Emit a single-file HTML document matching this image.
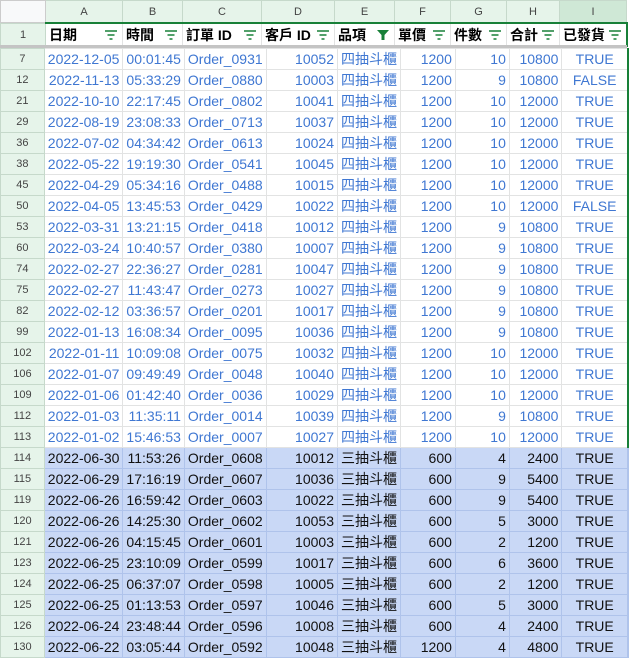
<!DOCTYPE html><html><head><meta charset="utf-8"><style>
body{margin:0;width:629px;height:659px;overflow:hidden;background:#fff;font-family:"Liberation Sans","Noto Sans CJK TC",sans-serif;}
table{border-collapse:collapse;table-layout:fixed;position:absolute;left:0;}
td{border:1px solid #e2e3e3;padding:0 3px;font-size:14px;white-space:nowrap;overflow:hidden;height:20px;line-height:20px;text-align:right;}
#h{top:0}
#h td{background:#e6f4ea;color:#444;font-size:11px;text-align:center;height:21px;border-color:#c6d9cb}
#h td.c{background:#f8f9fa;border-color:#ccc}
#h td.s{background:#cfe8d6}
#r1{top:22px}
#r1 td{height:22px;font-weight:bold;color:#000;text-align:left;position:relative;border-top:2px solid #188038;}
#r1 td.n{background:#e6f4ea;font-weight:normal;font-size:11px;color:#444;text-align:center;border-top:1px solid #c6d9cb}
.f{position:absolute;right:5px;top:6px;width:12px;height:10px}
#b{top:48px}
td.n{background:#e6f4ea;color:#444;font-size:11px;text-align:center;border-color:#c6d9cb}
tr.u td{color:#3f77d2}
tr.u td.n{color:#444}
tr.p td{background:#c9d8f6;color:#111;border-color:#afc3eb}
tr.p td.n{background:#e6f4ea;color:#444;border-color:#c6d9cb}
td.l{text-align:left}td.m{text-align:center}
td.z{border-right:2px solid #188038}
.sep{position:absolute;left:0;top:45px;width:627px;height:3px;background:#c4c4c4}
</style></head><body>
<colgroup></colgroup>
<table id="h"><colgroup><col style="width:45px"><col style="width:77px"><col style="width:60px"><col style="width:79px"><col style="width:73px"><col style="width:60px"><col style="width:56px"><col style="width:56px"><col style="width:53px"><col style="width:67px"></colgroup>
<tr><td class="c"></td><td>A</td><td>B</td><td>C</td><td>D</td><td>E</td><td>F</td><td>G</td><td>H</td><td class="s">I</td></tr></table>
<table id="r1"><colgroup><col style="width:45px"><col style="width:77px"><col style="width:60px"><col style="width:79px"><col style="width:73px"><col style="width:60px"><col style="width:56px"><col style="width:56px"><col style="width:53px"><col style="width:67px"></colgroup>
<tr><td class="n">1</td>
<td>日期<svg class="f" viewBox="0 0 12 10"><path d="M0 1h12M2.5 5h7M4.5 9h3" stroke="#188038" stroke-width="1.4"/></svg></td>
<td>時間<svg class="f" viewBox="0 0 12 10"><path d="M0 1h12M2.5 5h7M4.5 9h3" stroke="#188038" stroke-width="1.4"/></svg></td>
<td>訂單 ID<svg class="f" viewBox="0 0 12 10"><path d="M0 1h12M2.5 5h7M4.5 9h3" stroke="#188038" stroke-width="1.4"/></svg></td>
<td>客戶 ID<svg class="f" viewBox="0 0 12 10"><path d="M0 1h12M2.5 5h7M4.5 9h3" stroke="#188038" stroke-width="1.4"/></svg></td>
<td>品項<svg class="f" viewBox="0 0 12 10"><path d="M0 0h12L7.5 5v5h-3V5z" fill="#188038"/></svg></td>
<td>單價<svg class="f" viewBox="0 0 12 10"><path d="M0 1h12M2.5 5h7M4.5 9h3" stroke="#188038" stroke-width="1.4"/></svg></td>
<td>件數<svg class="f" viewBox="0 0 12 10"><path d="M0 1h12M2.5 5h7M4.5 9h3" stroke="#188038" stroke-width="1.4"/></svg></td>
<td>合計<svg class="f" viewBox="0 0 12 10"><path d="M0 1h12M2.5 5h7M4.5 9h3" stroke="#188038" stroke-width="1.4"/></svg></td>
<td class="z">已發貨<svg class="f" viewBox="0 0 12 10"><path d="M0 1h12M2.5 5h7M4.5 9h3" stroke="#188038" stroke-width="1.4"/></svg></td></tr></table>
<div class="sep"></div>
<table id="b"><colgroup><col style="width:45px"><col style="width:77px"><col style="width:60px"><col style="width:79px"><col style="width:73px"><col style="width:60px"><col style="width:56px"><col style="width:56px"><col style="width:53px"><col style="width:67px"></colgroup>
<tr class="u"><td class="n">7</td><td>2022-12-05</td><td>00:01:45</td><td class="l">Order_0931</td><td>10052</td><td class="l">四抽斗櫃</td><td>1200</td><td>10</td><td>10800</td><td class="m z">TRUE</td></tr>
<tr class="u"><td class="n">12</td><td>2022-11-13</td><td>05:33:29</td><td class="l">Order_0880</td><td>10003</td><td class="l">四抽斗櫃</td><td>1200</td><td>9</td><td>10800</td><td class="m z">FALSE</td></tr>
<tr class="u"><td class="n">21</td><td>2022-10-10</td><td>22:17:45</td><td class="l">Order_0802</td><td>10041</td><td class="l">四抽斗櫃</td><td>1200</td><td>10</td><td>12000</td><td class="m z">TRUE</td></tr>
<tr class="u"><td class="n">29</td><td>2022-08-19</td><td>23:08:33</td><td class="l">Order_0713</td><td>10037</td><td class="l">四抽斗櫃</td><td>1200</td><td>10</td><td>12000</td><td class="m z">TRUE</td></tr>
<tr class="u"><td class="n">36</td><td>2022-07-02</td><td>04:34:42</td><td class="l">Order_0613</td><td>10024</td><td class="l">四抽斗櫃</td><td>1200</td><td>10</td><td>12000</td><td class="m z">TRUE</td></tr>
<tr class="u"><td class="n">38</td><td>2022-05-22</td><td>19:19:30</td><td class="l">Order_0541</td><td>10045</td><td class="l">四抽斗櫃</td><td>1200</td><td>10</td><td>12000</td><td class="m z">TRUE</td></tr>
<tr class="u"><td class="n">45</td><td>2022-04-29</td><td>05:34:16</td><td class="l">Order_0488</td><td>10015</td><td class="l">四抽斗櫃</td><td>1200</td><td>10</td><td>12000</td><td class="m z">TRUE</td></tr>
<tr class="u"><td class="n">50</td><td>2022-04-05</td><td>13:45:53</td><td class="l">Order_0429</td><td>10022</td><td class="l">四抽斗櫃</td><td>1200</td><td>10</td><td>12000</td><td class="m z">FALSE</td></tr>
<tr class="u"><td class="n">53</td><td>2022-03-31</td><td>13:21:15</td><td class="l">Order_0418</td><td>10012</td><td class="l">四抽斗櫃</td><td>1200</td><td>9</td><td>10800</td><td class="m z">TRUE</td></tr>
<tr class="u"><td class="n">60</td><td>2022-03-24</td><td>10:40:57</td><td class="l">Order_0380</td><td>10007</td><td class="l">四抽斗櫃</td><td>1200</td><td>9</td><td>10800</td><td class="m z">TRUE</td></tr>
<tr class="u"><td class="n">74</td><td>2022-02-27</td><td>22:36:27</td><td class="l">Order_0281</td><td>10047</td><td class="l">四抽斗櫃</td><td>1200</td><td>9</td><td>10800</td><td class="m z">TRUE</td></tr>
<tr class="u"><td class="n">75</td><td>2022-02-27</td><td>11:43:47</td><td class="l">Order_0273</td><td>10027</td><td class="l">四抽斗櫃</td><td>1200</td><td>9</td><td>10800</td><td class="m z">TRUE</td></tr>
<tr class="u"><td class="n">82</td><td>2022-02-12</td><td>03:36:57</td><td class="l">Order_0201</td><td>10017</td><td class="l">四抽斗櫃</td><td>1200</td><td>9</td><td>10800</td><td class="m z">TRUE</td></tr>
<tr class="u"><td class="n">99</td><td>2022-01-13</td><td>16:08:34</td><td class="l">Order_0095</td><td>10036</td><td class="l">四抽斗櫃</td><td>1200</td><td>9</td><td>10800</td><td class="m z">TRUE</td></tr>
<tr class="u"><td class="n">102</td><td>2022-01-11</td><td>10:09:08</td><td class="l">Order_0075</td><td>10032</td><td class="l">四抽斗櫃</td><td>1200</td><td>10</td><td>12000</td><td class="m z">TRUE</td></tr>
<tr class="u"><td class="n">106</td><td>2022-01-07</td><td>09:49:49</td><td class="l">Order_0048</td><td>10040</td><td class="l">四抽斗櫃</td><td>1200</td><td>10</td><td>12000</td><td class="m z">TRUE</td></tr>
<tr class="u"><td class="n">109</td><td>2022-01-06</td><td>01:42:40</td><td class="l">Order_0036</td><td>10029</td><td class="l">四抽斗櫃</td><td>1200</td><td>10</td><td>12000</td><td class="m z">TRUE</td></tr>
<tr class="u"><td class="n">112</td><td>2022-01-03</td><td>11:35:11</td><td class="l">Order_0014</td><td>10039</td><td class="l">四抽斗櫃</td><td>1200</td><td>9</td><td>10800</td><td class="m z">TRUE</td></tr>
<tr class="u"><td class="n">113</td><td>2022-01-02</td><td>15:46:53</td><td class="l">Order_0007</td><td>10027</td><td class="l">四抽斗櫃</td><td>1200</td><td>10</td><td>12000</td><td class="m z">TRUE</td></tr>
<tr class="p"><td class="n">114</td><td>2022-06-30</td><td>11:53:26</td><td class="l">Order_0608</td><td>10012</td><td class="l">三抽斗櫃</td><td>600</td><td>4</td><td>2400</td><td class="m z">TRUE</td></tr>
<tr class="p"><td class="n">115</td><td>2022-06-29</td><td>17:16:19</td><td class="l">Order_0607</td><td>10036</td><td class="l">三抽斗櫃</td><td>600</td><td>9</td><td>5400</td><td class="m z">TRUE</td></tr>
<tr class="p"><td class="n">119</td><td>2022-06-26</td><td>16:59:42</td><td class="l">Order_0603</td><td>10022</td><td class="l">三抽斗櫃</td><td>600</td><td>9</td><td>5400</td><td class="m z">TRUE</td></tr>
<tr class="p"><td class="n">120</td><td>2022-06-26</td><td>14:25:30</td><td class="l">Order_0602</td><td>10053</td><td class="l">三抽斗櫃</td><td>600</td><td>5</td><td>3000</td><td class="m z">TRUE</td></tr>
<tr class="p"><td class="n">121</td><td>2022-06-26</td><td>04:15:45</td><td class="l">Order_0601</td><td>10003</td><td class="l">三抽斗櫃</td><td>600</td><td>2</td><td>1200</td><td class="m z">TRUE</td></tr>
<tr class="p"><td class="n">123</td><td>2022-06-25</td><td>23:10:09</td><td class="l">Order_0599</td><td>10017</td><td class="l">三抽斗櫃</td><td>600</td><td>6</td><td>3600</td><td class="m z">TRUE</td></tr>
<tr class="p"><td class="n">124</td><td>2022-06-25</td><td>06:37:07</td><td class="l">Order_0598</td><td>10005</td><td class="l">三抽斗櫃</td><td>600</td><td>2</td><td>1200</td><td class="m z">TRUE</td></tr>
<tr class="p"><td class="n">125</td><td>2022-06-25</td><td>01:13:53</td><td class="l">Order_0597</td><td>10046</td><td class="l">三抽斗櫃</td><td>600</td><td>5</td><td>3000</td><td class="m z">TRUE</td></tr>
<tr class="p"><td class="n">126</td><td>2022-06-24</td><td>23:48:44</td><td class="l">Order_0596</td><td>10008</td><td class="l">三抽斗櫃</td><td>600</td><td>4</td><td>2400</td><td class="m z">TRUE</td></tr>
<tr class="p"><td class="n">130</td><td>2022-06-22</td><td>03:05:44</td><td class="l">Order_0592</td><td>10048</td><td class="l">三抽斗櫃</td><td>1200</td><td>4</td><td>4800</td><td class="m z">TRUE</td></tr>
</table>
</body></html>
